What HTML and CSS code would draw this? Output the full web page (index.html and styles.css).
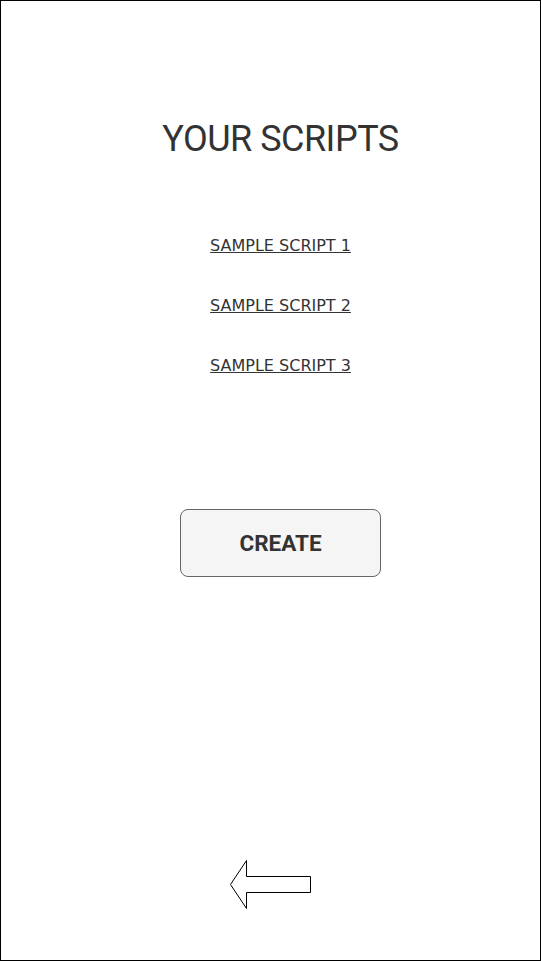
FILE: index.html
```html
<!DOCTYPE html>
<html>
<head>
<meta charset="utf-8">
<link rel="stylesheet" href="styles.css">
</head>
<body>
<div class="screen">
  <h1 class="title">YOUR SCRIPTS</h1>
  <ul class="scripts">
    <li><a class="script-link" href="#">SAMPLE SCRIPT 1</a></li>
    <li><a class="script-link" href="#">SAMPLE SCRIPT 2</a></li>
    <li><a class="script-link" href="#">SAMPLE SCRIPT 3</a></li>
  </ul>
  <button class="create">CREATE</button>
  <div class="spacer"></div>
  <svg class="back" width="84" height="50" viewBox="0 0 84 50">
    <polygon points="1.5,24.5 17.5,0.5 17.5,16.5 81.5,16.5 81.5,32.5 17.5,32.5 17.5,48.5" fill="#fff" stroke="#000" stroke-width="1"/>
  </svg>
</div>
</body>
</html>
```
FILE: styles.css
```css
html, body {
  margin: 0;
  padding: 0;
  background: #fff;
}
.screen {
  box-sizing: border-box;
  width: 541px;
  height: 961px;
  border: 1px solid #000;
  padding-left: 20px;
  display: flex;
  flex-direction: column;
  align-items: center;
  font-family: "DejaVu Sans", sans-serif;
  color: #333;
}
.title {
  margin: 115px 0 0 0;
  font-family: Roboto, sans-serif;
  font-size: 36px;
  font-weight: normal;
  line-height: 46px;
  letter-spacing: -0.5px;
}
.scripts {
  list-style: none;
  margin: 74px 0 0 0;
  padding: 0;
  display: flex;
  flex-direction: column;
  align-items: center;
  gap: 40px;
}
.script-link {
  display: block;
  font-size: 16px;
  line-height: 20px;
  color: #333;
  text-decoration: underline;
}
.create {
  margin-top: 133px;
  width: 201px;
  height: 68px;
  box-sizing: border-box;
  border: 1px solid #666;
  border-radius: 8px;
  background: #f5f5f5;
  font-family: Roboto, sans-serif;
  font-weight: bold;
  font-size: 22.5px;
  color: #333;
  padding: 0;
}
.spacer {
  flex: 1;
}
.back {
  display: block;
  margin: 0 0 50px -20px;
}
```
